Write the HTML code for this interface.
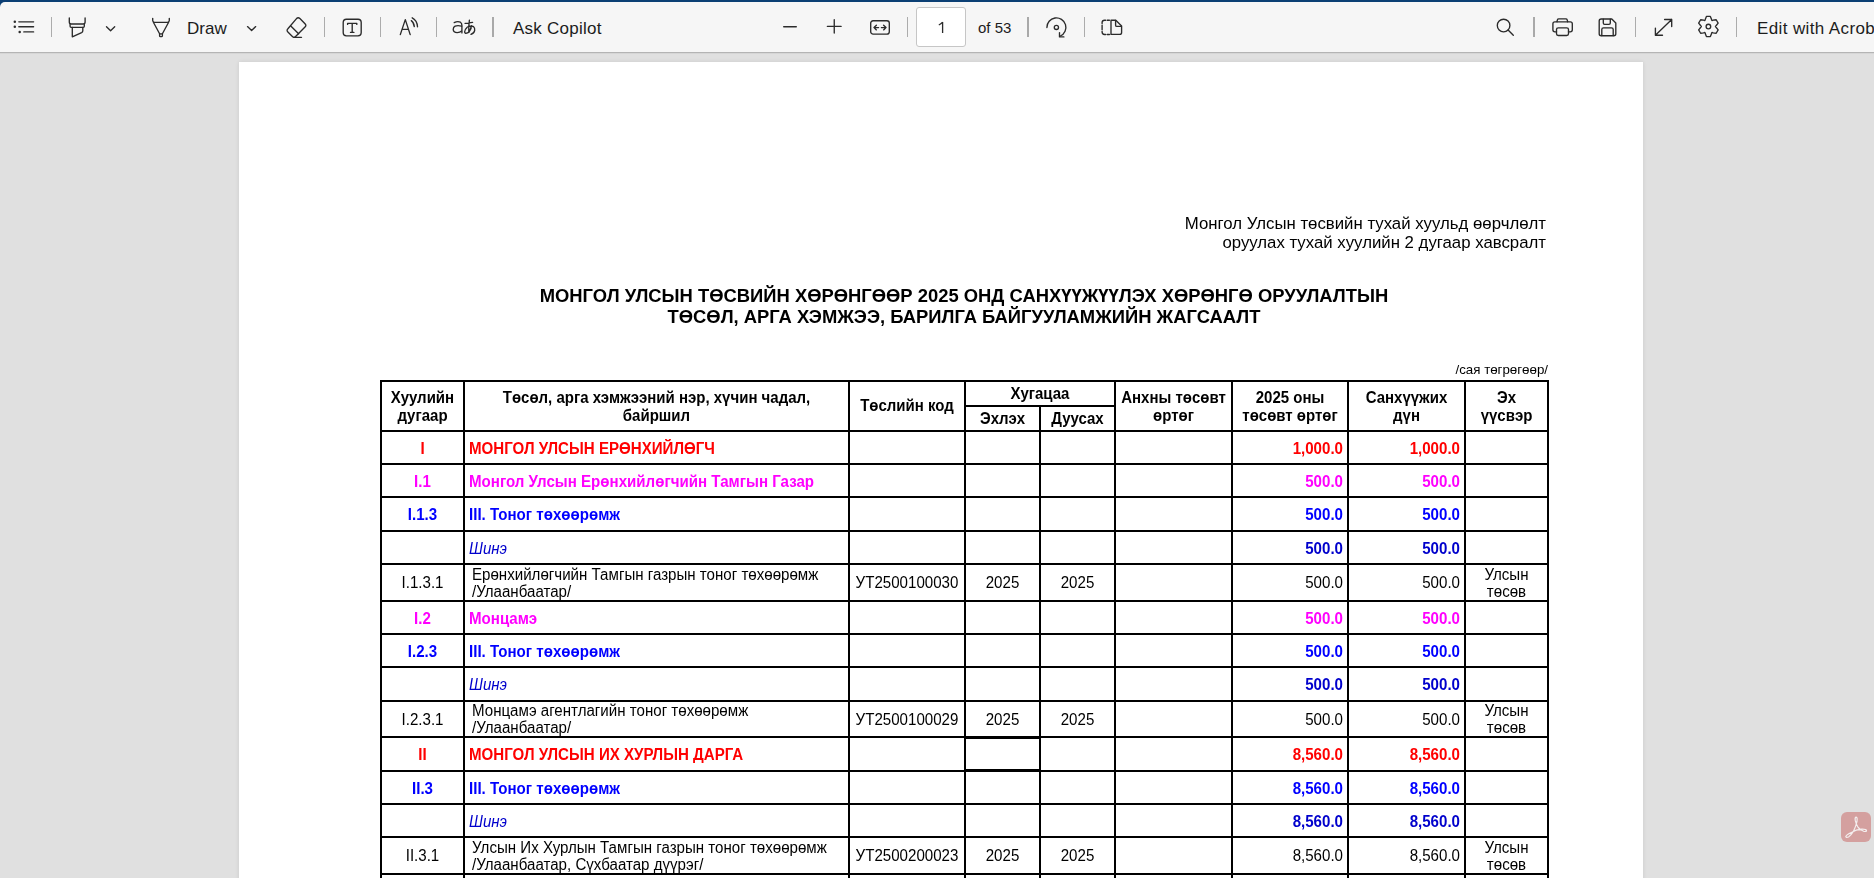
<!DOCTYPE html><html><head><meta charset="utf-8"><title>PDF</title><style>
*{margin:0;padding:0;box-sizing:border-box}
html,body{width:1874px;height:878px;overflow:hidden;background:#e0e0e0;font-family:"Liberation Sans", sans-serif}
.a{position:absolute}
.c,.gs{will-change:transform}
#top{position:absolute;left:0;top:0;width:1874px;height:54px;background:#0b3f74}
#tb{position:absolute;left:0;top:2px;width:1874px;height:50px;background:#f6f6f6;border-top-left-radius:5px}
#tbline{position:absolute;left:0;top:52px;width:1874px;height:1px;background:#b4b4b4}
#tbline2{position:absolute;left:0;top:53px;width:1874px;height:1px;background:#d6d6d6}
.sep{position:absolute;top:17px;height:20px;width:1px;background:#acacac}
.sep2{position:absolute;top:17px;height:20px;width:2px;background:#a9a9a9}
.tt{position:absolute;font-size:17px;color:#1c1c1c;white-space:nowrap;line-height:20px}
svg.i{position:absolute;overflow:visible}
#page{position:absolute;left:239px;top:62px;width:1404px;height:900px;background:#fff;box-shadow:0 0 4px rgba(0,0,0,.10)}
.h{position:absolute;height:2px;background:#000}
.v{position:absolute;width:2px;background:#000}
.c{position:absolute;display:flex;align-items:center;font-size:15.1px;line-height:15.5px;white-space:nowrap;color:#000;padding-top:1px}
.s1{padding-top:2px}
.ctr{justify-content:center;text-align:center}
.lft{justify-content:flex-start}
.rgt{justify-content:flex-end}
.b{font-weight:bold}
.sy{display:inline-block;transform:scaleY(1.045)}
.two .sy{position:relative;top:-0.5px;line-height:15.8px}
.hd{font-weight:bold;line-height:17.03px;font-size:15px;padding-top:0}
.red{color:#ff0000}
.mag{color:#ff00ff}
.blu{color:#0000ff}
.dbl{color:#0000cc}
</style></head><body>
<div id="top"></div><div id="tb"></div><div id="tbline"></div><div id="tbline2"></div>
<div class="sep" style="left:51px"></div>
<div class="sep" style="left:324px"></div>
<div class="sep" style="left:380px"></div>
<div class="sep" style="left:436px"></div>
<div class="sep" style="left:907px"></div>
<div class="sep" style="left:1084px"></div>
<div class="sep" style="left:1635px"></div>
<div class="sep" style="left:1736px"></div>
<div class="sep2" style="left:492px"></div>
<div class="sep2" style="left:1027px"></div>
<div class="sep2" style="left:1533px"></div>
<svg class="i" style="left:12px;top:18px" width="24" height="18" viewBox="0 0 24 18"><g stroke="#2b2b2b" fill="none" stroke-width="1.35" stroke-linecap="round" stroke-linejoin="round"><path d="M6.8 3.8H21.6M6.8 8.7H21.6M11.8 13.9H21.6"/></g><g fill="#2b2b2b"><circle cx="2.8" cy="3.8" r="1.25"/><circle cx="2.8" cy="8.7" r="1.25"/><circle cx="7.7" cy="13.9" r="1.25"/></g></svg>
<svg class="i" style="left:68px;top:16px" width="20" height="22" viewBox="0 0 20 22"><g stroke="#2b2b2b" fill="none" stroke-width="1.35" stroke-linecap="round" stroke-linejoin="round"><path d="M1.3 2V6.1Q1.3 8 3.2 8H15.2Q17.1 8 17.1 6.1V2"/><path d="M2.1 8.2V10.2Q2.1 11.3 3.2 11.3H15.2Q16.3 11.3 16.3 10.2V8.2"/><path d="M4.3 11.4V20.8L13.6 16.6Q14.8 16 14.8 14.8V11.4"/></g></svg>
<svg class="i" style="left:105px;top:25px" width="12" height="8" viewBox="0 0 12 8"><path stroke="#2b2b2b" fill="none" stroke-width="1.35" stroke-linecap="round" stroke-linejoin="round" d="M1.5 1.8L5.6 5.8L9.7 1.8"/></svg>
<svg class="i" style="left:151px;top:16px" width="22" height="22" viewBox="0 0 22 22"><g stroke="#2b2b2b" fill="none" stroke-width="1.35" stroke-linecap="round" stroke-linejoin="round"><path d="M1.7 2.3V4.5Q1.7 6.3 3.5 6.3H16.5Q18.3 6.3 18.3 4.5V2.3"/><path d="M2.5 6.5L8.6 17.8M17.5 6.5L11.4 17.8"/><path d="M8.6 17.8V19.7Q8.6 20.6 9.5 20.6H10.5Q11.4 20.6 11.4 19.7V17.8Z"/></g></svg>
<div class="tt" style="left:187px;top:19px">Draw</div>
<svg class="i" style="left:246px;top:25px" width="12" height="8" viewBox="0 0 12 8"><path stroke="#2b2b2b" fill="none" stroke-width="1.35" stroke-linecap="round" stroke-linejoin="round" d="M1.5 1.6L5.6 5.6L9.7 1.6"/></svg>
<svg class="i" style="left:285px;top:16px" width="24" height="23" viewBox="0 0 24 23"><g stroke="#2b2b2b" fill="none" stroke-width="1.35" stroke-linecap="round" stroke-linejoin="round"><path d="M11.5 2.6Q13.2 0.9 14.9 2.6L20 7.7Q21.7 9.4 20 11.1L10.6 20.5Q9 22.1 7.4 20.5L2.9 16Q1.3 14.4 2.9 12.8Z"/><path d="M5.8 10L13.6 17.8"/><path d="M9 21.3H16.5"/></g></svg>
<svg class="i" style="left:341px;top:17px" width="22" height="21" viewBox="0 0 22 21"><g stroke="#2b2b2b" fill="none" stroke-width="1.35" stroke-linecap="round" stroke-linejoin="round"><rect x="2.2" y="2.2" width="18" height="16.6" rx="3.2"/><path d="M6.6 7.4V6.3H15.8V7.4M11.2 6.3V15.4M9.5 15.4H12.9"/></g></svg>
<svg class="i" style="left:399px;top:16px" width="22" height="21" viewBox="0 0 22 21"><g stroke="#2b2b2b" fill="none" stroke-width="1.35" stroke-linecap="round" stroke-linejoin="round"><path d="M1.3 18.6L6.3 3.6L11.2 18.6M3.1 13.3H9.5"/><path d="M12.3 4.6Q15 6.5 15.3 10.6" /><path d="M13.2 1.8Q18.3 4.5 18.5 10.8"/></g></svg>
<svg class="i" style="left:445px;top:14px" width="34" height="24" viewBox="0 0 34 24"><g stroke="#2b2b2b" fill="none" stroke-width="1.35" stroke-linecap="round" stroke-linejoin="round"><path d="M9.2 8.6Q12.7 6.8 15.4 8.2Q16.9 9.2 16.9 11.4V18.9"/><path d="M16.6 12.2Q13 11.1 10.1 12.1Q8.2 13.1 8.2 15.5Q8.5 18.7 12.3 18.6Q15 18.4 16.6 17.1"/><path d="M20.1 9.4L27.6 8.4M24.4 6.2Q23.5 12 23.8 18.3M26.4 11.6Q25.6 15.6 23.9 18.3M22.2 13.2Q19.6 15.6 19.6 17.9Q19.8 19.6 21.8 19.1Q24.5 18.3 26.2 13.9M23.2 12.6Q26.5 11.3 28.4 12.6Q30 14 29.7 16.3Q29.3 18.9 26 20.4"/></g></svg>
<div class="tt" style="left:513px;top:19px;letter-spacing:0.25px">Ask Copilot</div>
<svg class="i" style="left:782px;top:25px" width="16" height="4" viewBox="0 0 16 4"><path stroke="#2b2b2b" fill="none" stroke-width="1.35" stroke-linecap="round" stroke-linejoin="round" d="M1.7 1.7H14.3"/></svg>
<svg class="i" style="left:826px;top:18px" width="17" height="17" viewBox="0 0 17 17"><path stroke="#2b2b2b" fill="none" stroke-width="1.35" stroke-linecap="round" stroke-linejoin="round" d="M1.4 8.4H15.1M8.25 1.7V15.1"/></svg>
<svg class="i" style="left:869px;top:19px" width="22" height="17" viewBox="0 0 22 17"><g stroke="#2b2b2b" fill="none" stroke-width="1.35" stroke-linecap="round" stroke-linejoin="round"><rect x="1.7" y="1.7" width="18.6" height="13.4" rx="2.4"/><path d="M5 8.6H9.6M7.4 6.3L5 8.6L7.4 10.9M12.4 8.6H17M14.6 6.3L17 8.6L14.6 10.9"/></g></svg>
<div class="a" style="left:916px;top:7px;width:50px;height:40px;background:#fff;border:1px solid #c6c6c6;border-radius:3px"></div>
<svg class="i" style="left:936px;top:20px" width="10" height="15" viewBox="0 0 10 15"><path stroke="#2b2b2b" fill="none" stroke-width="1.3" stroke-linejoin="round" d="M6.6 2V12.9M6.6 2.1Q5 4.1 2.8 5"/></svg>
<div class="tt" style="left:978px;top:18px;font-size:15px">of 53</div>
<svg class="i" style="left:1045px;top:16px" width="23" height="24" viewBox="0 0 23 24"><g stroke="#2b2b2b" fill="none" stroke-width="1.35" stroke-linecap="round" stroke-linejoin="round"><path d="M1.9 11.5A9.5 9.5 0 1 1 15.4 20.0"/><path d="M14.5 16.6V20.9H18.9"/><circle cx="11.4" cy="11.4" r="2.1"/></g></svg>
<svg class="i" style="left:1100px;top:18px" width="24" height="19" viewBox="0 0 24 19"><g stroke="#2b2b2b" fill="none" stroke-width="1.35" stroke-linecap="round" stroke-linejoin="round"><path d="M5.6 2.2H4.5Q2.1 2.2 2.1 4.6V5.6M7.2 2.2H9.4M2.1 7.2V11.7M2.1 13.3V14.1Q2.1 16.5 4.5 16.5H5.6M7.2 16.5H9.4"/><path d="M11 2.2H15.8L21.6 8V14.4Q21.6 16.4 19.6 16.4H11Z"/><path d="M15.6 2.4V7.2Q15.6 8.4 16.8 8.4H21.4"/></g></svg>
<svg class="i" style="left:1495px;top:17px" width="20" height="20" viewBox="0 0 20 20"><g stroke="#2b2b2b" fill="none" stroke-width="1.35" stroke-linecap="round" stroke-linejoin="round"><circle cx="8.6" cy="8.5" r="6.3"/><path d="M13.1 13L18.3 18.2"/></g></svg>
<svg class="i" style="left:1551px;top:17px" width="23" height="20" viewBox="0 0 23 20"><g stroke="#2b2b2b" fill="none" stroke-width="1.35" stroke-linecap="round" stroke-linejoin="round"><path d="M5.9 4.7L6.4 2.9Q6.7 1.9 7.7 1.9H14.9Q15.9 1.9 16.2 2.9L16.7 4.7"/><path d="M5.5 14.8H3.9Q1.9 14.8 1.9 12.8V6.8Q1.9 4.8 3.9 4.8H19.3Q21.3 4.8 21.3 6.8V12.8Q21.3 14.8 19.3 14.8H17.5"/><rect x="5.5" y="10.8" width="12" height="7.7" rx="1.8"/></g></svg>
<svg class="i" style="left:1597px;top:17px" width="20" height="20" viewBox="0 0 20 20"><g stroke="#2b2b2b" fill="none" stroke-width="1.35" stroke-linecap="round" stroke-linejoin="round"><path d="M4.2 2H14.8L18.8 6V16.7Q18.8 18.7 16.8 18.7H4.2Q2.2 18.7 2.2 16.7V4Q2.2 2 4.2 2Z"/><path d="M6.3 2.2V6Q6.3 7.3 7.6 7.3H12Q13.3 7.3 13.3 6V2.2"/><path d="M4.8 18.5V12.6Q4.8 10.9 6.5 10.9H14.5Q16.2 10.9 16.2 12.6V18.5"/></g></svg>
<svg class="i" style="left:1653px;top:17px" width="21" height="21" viewBox="0 0 21 21"><g stroke="#2b2b2b" fill="none" stroke-width="1.35" stroke-linecap="round" stroke-linejoin="round"><path d="M2.4 18.2L18.7 2.5M11.6 2.5H18.7V9.5M2.4 11.1V18.2H9.5"/></g></svg>
<svg class="i" style="left:1698px;top:16px" width="22" height="22" viewBox="0 0 22 22"><g stroke="#2b2b2b" fill="none" stroke-width="1.35" stroke-linecap="round" stroke-linejoin="round"><path d="M7.31 3.23L8.43 0.39L12.37 0.39L13.49 3.23Q13.50 5.13 15.15 4.19L18.17 3.74L20.14 7.15L18.24 9.54Q16.60 10.50 18.24 11.46L20.14 13.85L18.17 17.26L15.15 16.81Q13.50 15.87 13.49 17.77L12.37 20.61L8.43 20.61L7.31 17.77Q7.30 15.87 5.65 16.81L2.63 17.26L0.66 13.85L2.56 11.46Q4.20 10.50 2.56 9.54L0.66 7.15L2.63 3.74L5.65 4.19Q7.30 5.13 7.31 3.23Z"/><circle cx="10.4" cy="10.5" r="2.3"/></g></svg>
<div class="tt" style="left:1757px;top:19px;letter-spacing:0.38px">Edit with Acrobat</div>
<div id="page"></div>
<div class="a gs" style="left:1100px;top:214px;width:446px;text-align:right;font-size:16.8px;line-height:19px;color:#000">Монгол Улсын төсвийн тухай хуульд өөрчлөлт<br>оруулах тухай хуулийн 2 дугаар хавсралт</div>
<div class="a gs" style="left:464px;top:285px;width:1000px;text-align:center;font-size:18.4px;line-height:21px;font-weight:bold;color:#000">МОНГОЛ УЛСЫН ТӨСВИЙН ХӨРӨНГӨӨР 2025 ОНД САНХҮҮЖҮҮЛЭХ ХӨРӨНГӨ ОРУУЛАЛТЫН<br>ТӨСӨЛ, АРГА ХЭМЖЭЭ, БАРИЛГА БАЙГУУЛАМЖИЙН ЖАГСААЛТ</div>
<div class="a gs" style="left:1348px;top:362px;width:200px;text-align:right;font-size:13.3px;line-height:16px;color:#000">/сая төгрөгөөр/</div>
<div class="h" style="left:380px;top:380px;width:1169px"></div>
<div class="h" style="left:380px;top:430px;width:1169px"></div>
<div class="h" style="left:380px;top:463px;width:1169px"></div>
<div class="h" style="left:380px;top:496px;width:1169px"></div>
<div class="h" style="left:380px;top:530px;width:1169px"></div>
<div class="h" style="left:380px;top:563px;width:1169px"></div>
<div class="h" style="left:380px;top:600px;width:1169px"></div>
<div class="h" style="left:380px;top:633px;width:1169px"></div>
<div class="h" style="left:380px;top:666px;width:1169px"></div>
<div class="h" style="left:380px;top:700px;width:1169px"></div>
<div class="h" style="left:380px;top:736px;width:1169px"></div>
<div class="h" style="left:380px;top:770px;width:1169px"></div>
<div class="h" style="left:380px;top:803px;width:1169px"></div>
<div class="h" style="left:380px;top:836px;width:1169px"></div>
<div class="h" style="left:380px;top:873px;width:1169px"></div>
<div class="h" style="left:964px;top:405px;width:152px"></div>
<div class="h" style="left:964px;top:736px;width:77px;height:3px"></div>
<div class="h" style="left:964px;top:769px;width:77px;height:3px"></div>
<div class="v" style="left:380px;top:380px;height:498px"></div>
<div class="v" style="left:463px;top:380px;height:498px"></div>
<div class="v" style="left:848px;top:380px;height:498px"></div>
<div class="v" style="left:964px;top:380px;height:498px"></div>
<div class="v" style="left:1039px;top:405px;height:473px"></div>
<div class="v" style="left:1114px;top:380px;height:498px"></div>
<div class="v" style="left:1231px;top:380px;height:498px"></div>
<div class="v" style="left:1347px;top:380px;height:498px"></div>
<div class="v" style="left:1464px;top:380px;height:498px"></div>
<div class="v" style="left:1547px;top:380px;height:498px"></div>
<div class="c ctr hd" style="left:382px;top:382px;width:81px;height:48px;"><span class="sy"><div>Хуулийн<br>дугаар</div></span></div>
<div class="c ctr hd" style="left:465px;top:382px;width:383px;height:48px;"><span class="sy"><div>Төсөл, арга хэмжээний нэр, хүчин чадал,<br>байршил</div></span></div>
<div class="c ctr hd" style="left:850px;top:382px;width:114px;height:48px;"><span class="sy"><div>Төслийн код</div></span></div>
<div class="c ctr hd" style="left:966px;top:382px;width:148px;height:23px;"><span class="sy"><div>Хугацаа</div></span></div>
<div class="c ctr hd" style="left:966px;top:407px;width:73px;height:23px;"><span class="sy"><div>Эхлэх</div></span></div>
<div class="c ctr hd" style="left:1041px;top:407px;width:73px;height:23px;"><span class="sy"><div>Дуусах</div></span></div>
<div class="c ctr hd" style="left:1116px;top:382px;width:115px;height:48px;"><span class="sy"><div>Анхны төсөвт<br>өртөг</div></span></div>
<div class="c ctr hd" style="left:1233px;top:382px;width:114px;height:48px;"><span class="sy"><div>2025 оны<br>төсөвт өртөг</div></span></div>
<div class="c ctr hd" style="left:1349px;top:382px;width:115px;height:48px;"><span class="sy"><div>Санхүүжих<br>дүн</div></span></div>
<div class="c ctr hd" style="left:1466px;top:382px;width:81px;height:48px;"><span class="sy"><div>Эх<br>үүсвэр</div></span></div>
<div class="c ctr b s1 red" style="left:382px;top:432px;width:81px;height:31px;"><span class="sy">I</span></div>
<div class="c lft b s1 red" style="left:465px;top:432px;width:383px;height:31px;padding-left:4px"><span class="sy">МОНГОЛ УЛСЫН ЕРӨНХИЙЛӨГЧ</span></div>
<div class="c rgt b s1 red" style="left:1233px;top:432px;width:114px;height:31px;padding-right:4px"><span class="sy">1,000.0</span></div>
<div class="c rgt b s1 red" style="left:1349px;top:432px;width:115px;height:31px;padding-right:4px"><span class="sy">1,000.0</span></div>
<div class="c ctr b s1 mag" style="left:382px;top:465px;width:81px;height:31px;"><span class="sy">I.1</span></div>
<div class="c lft b s1 mag" style="left:465px;top:465px;width:383px;height:31px;padding-left:4px"><span class="sy">Монгол Улсын Ерөнхийлөгчийн Тамгын Газар</span></div>
<div class="c rgt b s1 mag" style="left:1233px;top:465px;width:114px;height:31px;padding-right:4px"><span class="sy">500.0</span></div>
<div class="c rgt b s1 mag" style="left:1349px;top:465px;width:115px;height:31px;padding-right:4px"><span class="sy">500.0</span></div>
<div class="c ctr b s1 blu" style="left:382px;top:498px;width:81px;height:32px;"><span class="sy">I.1.3</span></div>
<div class="c lft b s1 blu" style="left:465px;top:498px;width:383px;height:32px;padding-left:4px"><span class="sy">III. Тоног төхөөрөмж</span></div>
<div class="c rgt b s1 blu" style="left:1233px;top:498px;width:114px;height:32px;padding-right:4px"><span class="sy">500.0</span></div>
<div class="c rgt b s1 blu" style="left:1349px;top:498px;width:115px;height:32px;padding-right:4px"><span class="sy">500.0</span></div>
<div class="c lft s1 dbl" style="left:465px;top:532px;width:383px;height:31px;padding-left:4px"><span class="sy"><i>Шинэ</i></span></div>
<div class="c rgt b s1 dbl" style="left:1233px;top:532px;width:114px;height:31px;padding-right:4px"><span class="sy">500.0</span></div>
<div class="c rgt b s1 dbl" style="left:1349px;top:532px;width:115px;height:31px;padding-right:4px"><span class="sy">500.0</span></div>
<div class="c ctr" style="left:382px;top:565px;width:81px;height:35px;"><span class="sy">I.1.3.1</span></div>
<div class="c lft two" style="left:465px;top:565px;width:383px;height:35px;padding-left:7px"><span class="sy"><div>Ерөнхийлөгчийн Тамгын газрын тоног төхөөрөмж<br>/Улаанбаатар/</div></span></div>
<div class="c ctr" style="left:850px;top:565px;width:114px;height:35px;"><span class="sy">УТ2500100030</span></div>
<div class="c ctr" style="left:966px;top:565px;width:73px;height:35px;"><span class="sy">2025</span></div>
<div class="c ctr" style="left:1041px;top:565px;width:73px;height:35px;"><span class="sy">2025</span></div>
<div class="c rgt" style="left:1233px;top:565px;width:114px;height:35px;padding-right:4px"><span class="sy">500.0</span></div>
<div class="c rgt" style="left:1349px;top:565px;width:115px;height:35px;padding-right:4px"><span class="sy">500.0</span></div>
<div class="c ctr two" style="left:1466px;top:565px;width:81px;height:35px;"><span class="sy"><div>Улсын<br>төсөв</div></span></div>
<div class="c ctr b s1 mag" style="left:382px;top:602px;width:81px;height:31px;"><span class="sy">I.2</span></div>
<div class="c lft b s1 mag" style="left:465px;top:602px;width:383px;height:31px;padding-left:4px"><span class="sy">Монцамэ</span></div>
<div class="c rgt b s1 mag" style="left:1233px;top:602px;width:114px;height:31px;padding-right:4px"><span class="sy">500.0</span></div>
<div class="c rgt b s1 mag" style="left:1349px;top:602px;width:115px;height:31px;padding-right:4px"><span class="sy">500.0</span></div>
<div class="c ctr b s1 blu" style="left:382px;top:635px;width:81px;height:31px;"><span class="sy">I.2.3</span></div>
<div class="c lft b s1 blu" style="left:465px;top:635px;width:383px;height:31px;padding-left:4px"><span class="sy">III. Тоног төхөөрөмж</span></div>
<div class="c rgt b s1 blu" style="left:1233px;top:635px;width:114px;height:31px;padding-right:4px"><span class="sy">500.0</span></div>
<div class="c rgt b s1 blu" style="left:1349px;top:635px;width:115px;height:31px;padding-right:4px"><span class="sy">500.0</span></div>
<div class="c lft s1 dbl" style="left:465px;top:668px;width:383px;height:32px;padding-left:4px"><span class="sy"><i>Шинэ</i></span></div>
<div class="c rgt b s1 dbl" style="left:1233px;top:668px;width:114px;height:32px;padding-right:4px"><span class="sy">500.0</span></div>
<div class="c rgt b s1 dbl" style="left:1349px;top:668px;width:115px;height:32px;padding-right:4px"><span class="sy">500.0</span></div>
<div class="c ctr" style="left:382px;top:702px;width:81px;height:34px;"><span class="sy">I.2.3.1</span></div>
<div class="c lft two" style="left:465px;top:702px;width:383px;height:34px;padding-left:7px"><span class="sy"><div>Монцамэ агентлагийн тоног төхөөрөмж<br>/Улаанбаатар/</div></span></div>
<div class="c ctr" style="left:850px;top:702px;width:114px;height:34px;"><span class="sy">УТ2500100029</span></div>
<div class="c ctr" style="left:966px;top:702px;width:73px;height:34px;"><span class="sy">2025</span></div>
<div class="c ctr" style="left:1041px;top:702px;width:73px;height:34px;"><span class="sy">2025</span></div>
<div class="c rgt" style="left:1233px;top:702px;width:114px;height:34px;padding-right:4px"><span class="sy">500.0</span></div>
<div class="c rgt" style="left:1349px;top:702px;width:115px;height:34px;padding-right:4px"><span class="sy">500.0</span></div>
<div class="c ctr two" style="left:1466px;top:702px;width:81px;height:34px;"><span class="sy"><div>Улсын<br>төсөв</div></span></div>
<div class="c ctr b s1 red" style="left:382px;top:738px;width:81px;height:32px;"><span class="sy">II</span></div>
<div class="c lft b s1 red" style="left:465px;top:738px;width:383px;height:32px;padding-left:4px"><span class="sy">МОНГОЛ УЛСЫН ИХ ХУРЛЫН ДАРГА</span></div>
<div class="c rgt b s1 red" style="left:1233px;top:738px;width:114px;height:32px;padding-right:4px"><span class="sy">8,560.0</span></div>
<div class="c rgt b s1 red" style="left:1349px;top:738px;width:115px;height:32px;padding-right:4px"><span class="sy">8,560.0</span></div>
<div class="c ctr b s1 blu" style="left:382px;top:772px;width:81px;height:31px;"><span class="sy">II.3</span></div>
<div class="c lft b s1 blu" style="left:465px;top:772px;width:383px;height:31px;padding-left:4px"><span class="sy">III. Тоног төхөөрөмж</span></div>
<div class="c rgt b s1 blu" style="left:1233px;top:772px;width:114px;height:31px;padding-right:4px"><span class="sy">8,560.0</span></div>
<div class="c rgt b s1 blu" style="left:1349px;top:772px;width:115px;height:31px;padding-right:4px"><span class="sy">8,560.0</span></div>
<div class="c lft s1 dbl" style="left:465px;top:805px;width:383px;height:31px;padding-left:4px"><span class="sy"><i>Шинэ</i></span></div>
<div class="c rgt b s1 dbl" style="left:1233px;top:805px;width:114px;height:31px;padding-right:4px"><span class="sy">8,560.0</span></div>
<div class="c rgt b s1 dbl" style="left:1349px;top:805px;width:115px;height:31px;padding-right:4px"><span class="sy">8,560.0</span></div>
<div class="c ctr" style="left:382px;top:838px;width:81px;height:35px;"><span class="sy">II.3.1</span></div>
<div class="c lft two" style="left:465px;top:838px;width:383px;height:35px;padding-left:7px"><span class="sy"><div>Улсын Их Хурлын Тамгын газрын тоног төхөөрөмж<br>/Улаанбаатар, Сүхбаатар дүүрэг/</div></span></div>
<div class="c ctr" style="left:850px;top:838px;width:114px;height:35px;"><span class="sy">УТ2500200023</span></div>
<div class="c ctr" style="left:966px;top:838px;width:73px;height:35px;"><span class="sy">2025</span></div>
<div class="c ctr" style="left:1041px;top:838px;width:73px;height:35px;"><span class="sy">2025</span></div>
<div class="c rgt" style="left:1233px;top:838px;width:114px;height:35px;padding-right:4px"><span class="sy">8,560.0</span></div>
<div class="c rgt" style="left:1349px;top:838px;width:115px;height:35px;padding-right:4px"><span class="sy">8,560.0</span></div>
<div class="c ctr two" style="left:1466px;top:838px;width:81px;height:35px;"><span class="sy"><div>Улсын<br>төсөв</div></span></div>
<div class="a" style="left:1841px;top:812px;width:30px;height:30px;border-radius:6px;background:#d4a09f"></div>
<svg class="i" style="left:1841px;top:812px" width="30" height="30" viewBox="0 0 30 30"><g fill="none" stroke="#f4eeee" stroke-width="1.2"><path d="M15.2 5.2Q13.8 5.4 14.2 8.2Q14.9 12 17.2 15.5Q19.5 18.3 22.7 19.3Q25.4 19.9 25.5 18.6Q25.3 17 20.5 17.2Q15 17.6 10.8 20.2Q5.2 22.8 4.8 24.5Q5 26 7.5 25Q10 23.5 12.5 19.3Q15 14 16 9.3Q16.5 5.2 15.2 5.2Z"/></g></svg>
</body></html>
